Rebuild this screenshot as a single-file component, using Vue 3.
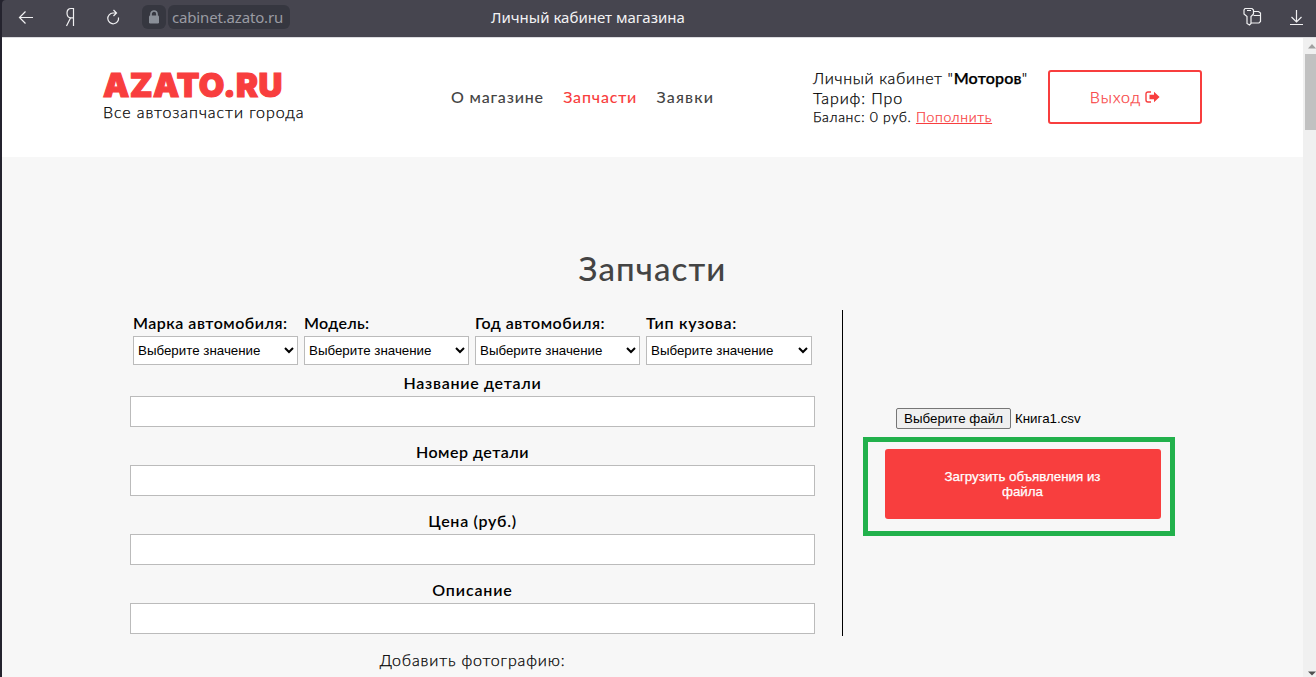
<script setup>
const selects = ['Марка автомобиля:', 'Модель:', 'Год автомобиля:', 'Тип кузова:']
const fields = [
  { label: 'Название детали', cls: 'f-name' },
  { label: 'Номер детали', cls: 'f-number' },
  { label: 'Цена (руб.)', cls: 'f-price' },
  { label: 'Описание', cls: 'f-desc' },
]
</script>

<template>
  <div class="window">
    <div class="bar">
      <svg class="ic back" width="16" height="16" viewBox="0 0 16 16"><path d="M15 8.500H1.500M7.500 2.500L1.500 8.500l6 6" /></svg>
      <svg class="ic ya" width="10" height="20" viewBox="0 0 10 20"><path d="M8.500 19V1.500H6C3.500 1.500 2 3.300 2 6s1.500 4.800 4 4.800h2.500M5.500 11L1.500 19" /></svg>
      <svg class="ic reload" width="14" height="16" viewBox="0 0 14 16"><path d="M12.500 8.500A5.400 5.400 0 1 1 7 4H10.500M7.500 1L10.500 4 7.500 7" /></svg>
      <div class="lock">
        <svg width="12" height="14" viewBox="0 0 12 14"><path d="M3 6.500V4a3 3 0 0 1 6 0v2.500" fill="none" stroke="#8a8f98" stroke-width="1.700" /><rect x="1" y="5.500" width="10" height="8" rx="1.200" fill="#8a8f98" /></svg>
      </div>
      <div class="url"><span>cabinet.azato.ru</span></div>
      <div class="title"><span>Личный кабинет магазина</span></div>
      <svg class="ic keys" width="20" height="20" viewBox="0 0 20 20"><path d="M3 1.500h7l1.500 1.500v4L9 9.500v7L7.500 18 5 16.500v-7L2 7V3zM5 3.500h4M11.500 4.500h5L18.500 6v8.500L17 16H9M11.500 8.500h7" /></svg>
      <svg class="ic down" width="14" height="17" viewBox="0 0 14 17"><path d="M7.500 1v12M2.500 8l5 5 5-5M1 15.500h13" /></svg>
    </div>

    <div class="view">
      <div class="page">
        <header class="head">
          <div class="brand">
            <div class="logo"><span>AZATO.RU</span></div>
            <div class="slogan"><span>Все автозапчасти города</span></div>
          </div>
          <nav class="nav">
            <a class="n1">О магазине</a>
            <a class="n2">Запчасти</a>
            <a class="n3">Заявки</a>
          </nav>
          <div class="account">
            <div class="cab">Личный кабинет "<b>Моторов</b>"</div>
            <div class="tariff">Тариф: Про</div>
            <div class="balance">Баланс: 0 руб. <a>Пополнить</a></div>
          </div>
          <button class="exit">
            <span>Выход</span>
            <svg width="15" height="12" viewBox="0 0 15 12"><path d="M6 1H3a2 2 0 0 0-2 2v6a2 2 0 0 0 2 2h3" fill="none" stroke="#f83e3e" stroke-width="1.400" /><path d="M4.500 3.800H9V.8L14.600 6 9 11.200v-3H4.500z" fill="#f83e3e" /></svg>
          </button>
        </header>

        <main class="main">
          <h1><span>Запчасти</span></h1>
          <div class="cols">
            <form class="form">
              <div class="selects">
                <div v-for="(s, i) in selects" :key="s" class="sel">
                  <label :class="'s' + i"><span>{{ s }}</span></label>
                  <select><option>Выберите значение</option></select>
                </div>
              </div>
              <div v-for="f in fields" :key="f.label" class="field">
                <label :class="f.cls">{{ f.label }}</label>
                <input type="text" />
              </div>
              <div class="photo"><span>Добавить фотографию:</span></div>
            </form>
            <div class="line"></div>
            <div class="upload">
              <div class="file"><button class="pick">Выберите файл</button><span>Книга1.csv</span></div>
              <div class="frame">
                <button class="send">Загрузить объявления из файла</button>
              </div>
            </div>
          </div>
        </main>
      </div>
      <div class="scroll">
        <svg width="8" height="5" viewBox="0 0 8 5"><path d="M4 0l4 4.500H0z" fill="#a0a0a0" /></svg>
        <div class="thumb"></div>
        <svg width="8" height="5" viewBox="0 0 8 5"><path d="M4 4.500L0 .5h8z" fill="#505050" /></svg>
      </div>
    </div>
  </div>
</template>

<style>
body { overflow: hidden; background: #24232e; }
</style>

<style scoped>
* { box-sizing: border-box; }
.window { width: 1316px; height: 677px; padding-left: 2px; background: #24232e; overflow: hidden; font-family: Lato, "Open Sans", sans-serif; color: #000; }
.bar { height: 38px; display: flex; align-items: flex-start; background: #46454f; border-bottom: 1px solid #dcdce0; border-top-left-radius: 4px; font-family: "Noto Sans", sans-serif; }
.ic { flex: none; fill: none; stroke: #f0f0f2; stroke-width: 1.2; }
.back { margin: 9px 0 0 16px; }
.ya { margin: 7px 0 0 31px; }
.reload { margin: 9px 0 0 31px; }
.lock { width: 24px; height: 24px; margin: 5px 0 0 22px; border-radius: 6px; background: #363740; display: flex; align-items: center; justify-content: center; }
.url { width: 122px; height: 24px; margin: 5px 0 0 2px; border-radius: 6px; background: #363740; color: #9a9ba3; font-size: 15px; line-height: 24px; letter-spacing: -.17px; padding-left: 4px; white-space: nowrap; }
.title { flex: 1; margin-left: 201px; font-size: 15px; line-height: 35px; color: #f2f2f4; white-space: nowrap; }
.keys { margin: 7px 16px 0 0; }
.down { margin: 9px 13px 0 11px; }

.view { height: 639px; display: flex; }
.page { width: 1301px; background: #f7f7f7; overflow: hidden; }
.head { height: 119px; background: #fff; display: flex; align-items: flex-start; white-space: nowrap; }
.brand { width: 448px; padding: 30px 0 0 101px; }
.logo { height: 34px; line-height: 34px; font-family: Inter, sans-serif; font-weight: 900; font-size: 33px; letter-spacing: .45px; -webkit-text-stroke: 1.2px #f83e3e; color: #f83e3e; }
.slogan { height: 20px; line-height: 20px; font-size: 16px; font-weight: 300; letter-spacing: .95px; }
.slogan, .account, .exit span, .photo { -webkit-text-stroke: .25px currentColor; }
.nav { display: flex; gap: 19.3px; width: 363px; padding-left: 1px; margin-top: 48px; height: 22px; line-height: 22px; font-size: 16px; font-weight: 500; letter-spacing: .82px; color: #444; }
.n2 { color: #f83e3e; }
.n3 { letter-spacing: 1.2px; }
.account { width: 235px; margin-top: 30px; line-height: 20px; font-size: 16px; font-weight: 300; }
.cab, .tariff { height: 20px; letter-spacing: .65px; }
.tariff { letter-spacing: .9px; }
.cab b { font-weight: 600; letter-spacing: .2px; }
.balance { height: 18px; line-height: 18px; font-size: 14px; letter-spacing: .65px; }
.balance a { color: #f83e3e; text-decoration: underline; }
.exit { width: 154px; height: 54px; margin-top: 32px; border: 2px solid #f83e3e; border-radius: 3px; background: #fff; color: #f83e3e; font-family: inherit; font-size: 16px; font-weight: 300; letter-spacing: 1px; display: flex; align-items: center; justify-content: center; gap: 4px; padding: 0 0 2px; }
.exit svg { margin-top: 2px; }

.main { padding-top: 89px; }
h1 { margin: 0; height: 44px; line-height: 44px; text-align: center; font-size: 33px; font-weight: 500; letter-spacing: 1.1px; color: #444; }
.cols { display: flex; margin-top: 20px; align-items: flex-start; }
.form { width: 685px; margin-left: 128px; }
.selects { display: flex; gap: 6px; padding: 4px 3px 0; }
.sel { width: 165px; }
.sel:last-child { width: 166px; }
label { display: block; height: 22px; line-height: 18px; font-size: 16px; font-weight: 600; letter-spacing: .5px; white-space: nowrap; }
.s1 { letter-spacing: .3px; }
.s3 { letter-spacing: .7px; }
.f-name { letter-spacing: .7px; }
.f-price { letter-spacing: .7px; }
.f-desc { letter-spacing: .85px; }
select { display: block; width: 100%; height: 29px; border: 1px solid #bbb; border-radius: 0; background: #fff; font: 13.333px "Liberation Sans", sans-serif; padding: 0; color: #000; }
.field { height: 69px; padding-top: 9px; text-align: center; }
input { display: block; width: 685px; height: 31px; border: 1px solid #bbb; background: #fff; padding: 0; }
.photo { height: 20px; line-height: 20px; margin-top: 9px; text-align: center; font-size: 16px; font-weight: 300; letter-spacing: .85px; }
.line { width: 1px; height: 326px; margin-left: 27px; background: #000; }
.upload { margin-left: 20px; width: 312px; padding-top: 98px; font: 13.333px "Liberation Sans", sans-serif; }
.file { display: flex; height: 21px; padding-left: 33px; gap: 4px; line-height: 21px; }
.pick { width: 115px; height: 21px; border: 1px solid #767676; border-radius: 2px; background: #efefef; font: inherit; padding: 0; line-height: 19px; color: #000; }
.frame { height: 99px; margin-top: 8px; border: 5px solid #22b14c; padding: 7px 0 0 17px; }
.send { width: 276px; height: 70px; border: 0; border-radius: 3px; background: #f83e3e; color: #fff; font: 13.333px/15px "Liberation Sans", sans-serif; -webkit-text-stroke: .25px #fff; padding: 0 51px 0 50px; }

.scroll { width: 13px; padding: 6px 0 1px 2px; background: #f0f0f0; display: flex; flex-direction: column; }
.scroll svg { margin-left: 3px; }
.thumb { height: 76px; margin: 5px 0 auto; background: #c1c1c1; }
</style>
